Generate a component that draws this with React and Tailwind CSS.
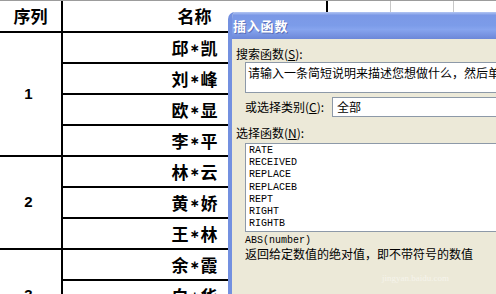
import React from "react";

const cjk = { fontFamily: '"Noto Sans CJK SC", "Noto Sans", sans-serif' };
const mono = { fontFamily: '"Liberation Mono", "DejaVu Sans Mono", monospace' };

function Name({ a, b }) {
  return (
    <div className="h-[29px] flex items-center justify-center text-[17px] font-bold text-black leading-none" style={cjk}>
      <span>{a}</span>
      <span className="text-[12px] font-bold mx-[1px]" style={{ fontFamily: '"DejaVu Sans", sans-serif' }}>∗</span>
      <span>{b}</span>
    </div>
  );
}

function Group({ num, names }) {
  return (
    <div className="flex border-b-2 border-black">
      <div className="w-[63px] shrink-0 border-r-2 border-black flex items-center justify-center pr-[4px] text-[15px] font-bold text-black" style={{ fontFamily: '"Liberation Sans", Arial, sans-serif' }}>
        {num}
      </div>
      <div className="w-[265px] shrink-0 border-r-2 border-black flex flex-col">
        {names.map((n, i) => (
          <div key={i} className={i < names.length - 1 ? "border-b-2 border-black" : ""}>
            <Name a={n[0]} b={n[1]} />
          </div>
        ))}
      </div>
    </div>
  );
}

export default function App() {
  const funcs = ["RATE", "RECEIVED", "REPLACE", "REPLACEB", "REPT", "RIGHT", "RIGHTB"];
  return (
    <div className="relative w-[496px] h-[294px] overflow-hidden bg-white">
      {/* spreadsheet table */}
      <div className="flex flex-col w-[700px] border-t border-[#9c9c9c]">
        <div className="flex h-[32px] border-b-2 border-black">
          <div className="w-[63px] shrink-0 border-r-2 border-black flex items-center justify-center text-[17px] font-bold text-black" style={cjk}>
            序列
          </div>
          <div className="w-[265px] shrink-0 border-r-2 border-black flex items-center justify-center text-[17px] font-bold text-black" style={cjk}>
            名称
          </div>
          <div className="w-[63px] shrink-0 border-r border-[#c8c8c8]" />
          <div className="w-[63px] shrink-0 border-r border-[#c8c8c8]" />
          <div className="w-[63px] shrink-0 border-r border-[#c8c8c8]" />
        </div>
        <Group num="1" names={[["邱", "凯"], ["刘", "峰"], ["欧", "显"], ["李", "平"]]} />
        <Group num="2" names={[["林", "云"], ["黄", "娇"], ["王", "林"]]} />
        <Group num="3" names={[["余", "霞"], ["白", "华"], ["陈", "明"]]} />
      </div>

      {/* insert function dialog */}
      <div className="absolute left-[228px] top-[12px] w-[300px] h-[300px] rounded-tl-[7px] overflow-hidden flex flex-col border-l-4 border-[#7390e0] bg-[#ECE9D8]">
        <div className="h-[27px] shrink-0 flex items-center pl-[1px] bg-[linear-gradient(to_bottom,#b3c6f3_0%,#7b98e6_12%,#7c9ce9_50%,#86a4ee_65%,#6c87d8_100%)]">
          <span className="text-[13px] font-bold text-white tracking-[0.8px] [text-shadow:1px_1px_0_#5a6fb8]" style={cjk}>插入函数</span>
        </div>
        <div className="flex flex-col text-[12px] text-black" style={cjk}>
          <div className="mt-[8px] pl-[4px] leading-[14px]">
            搜索函数(<span className="underline">S</span>):
          </div>
          <div className="ml-[13px] mt-[1px] h-[31px] bg-white border border-[#8d99a8] pl-[2px] pt-[3px] leading-[14px] whitespace-nowrap">
            请输入一条简短说明来描述您想做什么，然后单击“转到”
          </div>
          <div className="mt-[4px] ml-[13px] flex items-center h-[20px]">
            <span className="w-[87px] leading-[14px]">或选择类别(<span className="underline">C</span>):</span>
            <div className="flex-1 h-[20px] bg-white border border-[#8d99a8] flex items-center pl-[4px] leading-[14px]">全部</div>
          </div>
          <div className="mt-[9px] pl-[4px] leading-[14px]">
            选择函数(<span className="underline">N</span>):
          </div>
          <div className="ml-[13px] mt-[3px] h-[89px] bg-white border border-[#8d99a8] pl-[3px] pt-[1px] text-[10px] leading-[12.2px] text-black" style={mono}>
            {funcs.map((f) => (
              <div key={f}>{f}</div>
            ))}
          </div>
          <div className="ml-[13px] mt-[3px] text-[10px] leading-[12px]" style={mono}>ABS(number)</div>
          <div className="ml-[13px] leading-[14px] whitespace-nowrap">返回给定数值的绝对值，即不带符号的数值</div>
        </div>
        <div className="absolute left-[150px] top-[262px] text-[9px] text-white opacity-50 leading-none" style={{ fontFamily: '"Liberation Serif", serif' }}>
          jingyan.baidu.com
        </div>
      </div>
    </div>
  );
}
